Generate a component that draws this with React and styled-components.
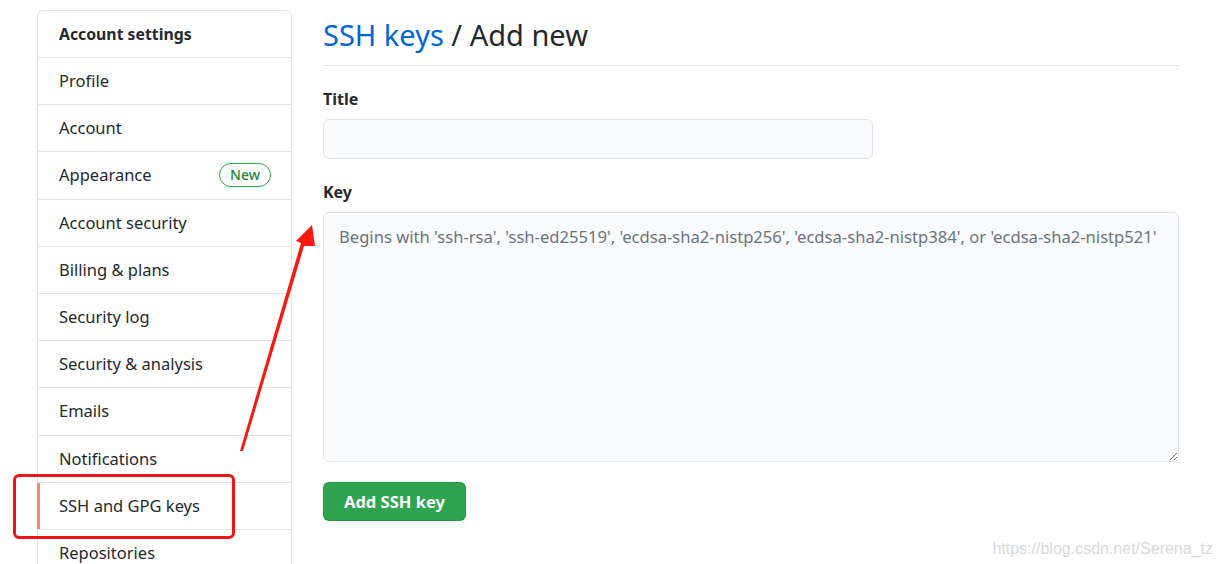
import React from "react";
import styled, { createGlobalStyle } from "styled-components";

const Global = createGlobalStyle`
  html, body { margin: 0; padding: 0; background: #fff; overflow: hidden; }
  body { font-family: "Noto Sans", "Open Sans", sans-serif; color: #24292e; }
  * { box-sizing: border-box; }
`;

const Page = styled.div`
  position: relative;
  width: 1223px;
  height: 564px;
  overflow: hidden;
  display: flex;
  align-items: flex-start;
  gap: 31px;
  padding: 10px 0 0 37px;
`;

const Sidebar = styled.nav`
  width: 255px;
  flex: none;
  border: 1px solid #e1e4e8;
  border-radius: 6px;
  background: #fff;
`;

const SideHeader = styled.div`
  height: 47px;
  display: flex;
  align-items: center;
  padding: 0 20px 0 21px;
  font-weight: 700;
  font-size: 15.8px;
  border-bottom: 1px solid #e1e4e8;
`;

const SideItem = styled.div`
  position: relative;
  height: 47.2px;
  display: flex;
  align-items: center;
  justify-content: space-between;
  padding: 0 20px 1px 21px;
  font-size: 16.5px;
  color: #24292e;
  border-bottom: 1px solid #e1e4e8;
  ${(p) =>
    p.$selected &&
    `
    &::before {
      content: "";
      position: absolute;
      left: -1px;
      top: 0;
      bottom: 0;
      width: 3px;
      background: #f9826c;
    }
  `}
`;

const Badge = styled.span`
  font-size: 14px;
  line-height: 22px;
  padding: 0 10px;
  border: 1px solid #28a745;
  border-radius: 12px;
  color: #22863a;
  font-weight: 500;
`;

const Main = styled.main`
  width: 856px;
  flex: none;
`;

const Heading = styled.h2`
  margin: 0;
  padding: 4px 0 9px;
  font-size: 29px;
  font-weight: 400;
  line-height: 42px;
  border-bottom: 1px solid #e1e4e8;
`;

const Crumb = styled.a`
  color: #0366d6;
  text-decoration: none;
`;

const Field = styled.div`
  display: flex;
  flex-direction: column;
  margin-top: ${(p) => p.$mt}px;
`;

const Label = styled.label`
  font-size: 16px;
  font-weight: 700;
  line-height: 22px;
  margin-bottom: 9px;
`;

const Input = styled.input`
  width: ${(p) => p.$w}px;
  height: 40px;
  background: #fafbfc;
  border: 1px solid #e1e4e8;
  border-radius: 6px;
  font: inherit;
  padding: 0 15px;
  outline: none;
`;

const TextArea = styled.textarea`
  width: 856px;
  height: 250px;
  background: #fafbfc;
  border: 1px solid #e1e4e8;
  border-radius: 6px;
  font-family: "Noto Sans", "Open Sans", sans-serif;
  font-size: 16.6px;
  line-height: 22px;
  padding: 13px 15px;
  outline: none;
  resize: vertical;
  &::placeholder { color: #6a737d; }
`;

const Button = styled.button`
  margin-top: 20px;
  height: 39px;
  padding: 0 20px;
  background: #2ea44f;
  border: 1px solid rgba(27, 31, 35, 0.15);
  border-radius: 6px;
  color: #fff;
  font-family: "Noto Sans", "Open Sans", sans-serif;
  font-size: 16.5px;
  font-weight: 700;
`;

const Annotation = styled.div`
  position: absolute;
  left: 13px;
  top: 474px;
  width: 222px;
  height: 65px;
  border: 3px solid #f01414;
  border-radius: 6px;
  pointer-events: none;
`;

const ArrowLayer = styled.svg`
  position: absolute;
  left: 0;
  top: 0;
  pointer-events: none;
`;

const Watermark = styled.div`
  position: absolute;
  right: 10px;
  bottom: 6px;
  font-family: "Liberation Sans", Arial, sans-serif;
  font-size: 16px;
  color: #d9d9d9;
`;

const items = [
  "Profile",
  "Account",
  "Appearance",
  "Account security",
  "Billing & plans",
  "Security log",
  "Security & analysis",
  "Emails",
  "Notifications",
  "SSH and GPG keys",
  "Repositories",
];

export default function App() {
  return (
    <>
      <Global />
      <Page>
        <Sidebar>
          <SideHeader>Account settings</SideHeader>
          {items.map((it) => (
            <SideItem key={it} $selected={it === "SSH and GPG keys"}>
              <span>{it}</span>
              {it === "Appearance" && <Badge>New</Badge>}
            </SideItem>
          ))}
        </Sidebar>
        <Main>
          <Heading>
            <Crumb href="#">SSH keys</Crumb> / Add new
          </Heading>
          <Field $mt={22}>
            <Label>Title</Label>
            <Input $w={550} />
          </Field>
          <Field $mt={22}>
            <Label>Key</Label>
            <TextArea placeholder="Begins with 'ssh-rsa', 'ssh-ed25519', 'ecdsa-sha2-nistp256', 'ecdsa-sha2-nistp384', or 'ecdsa-sha2-nistp521'" />
          </Field>
          <Button>Add SSH key</Button>
        </Main>
        <Annotation />
        <ArrowLayer width="1223" height="564" viewBox="0 0 1223 564">
          <polygon points="240,451 243,451 304,246 315,246 312,225 296,241 301,243" fill="#f51a12" />
        </ArrowLayer>
        <Watermark>https://blog.csdn.net/Serena_tz</Watermark>
      </Page>
    </>
  );
}
